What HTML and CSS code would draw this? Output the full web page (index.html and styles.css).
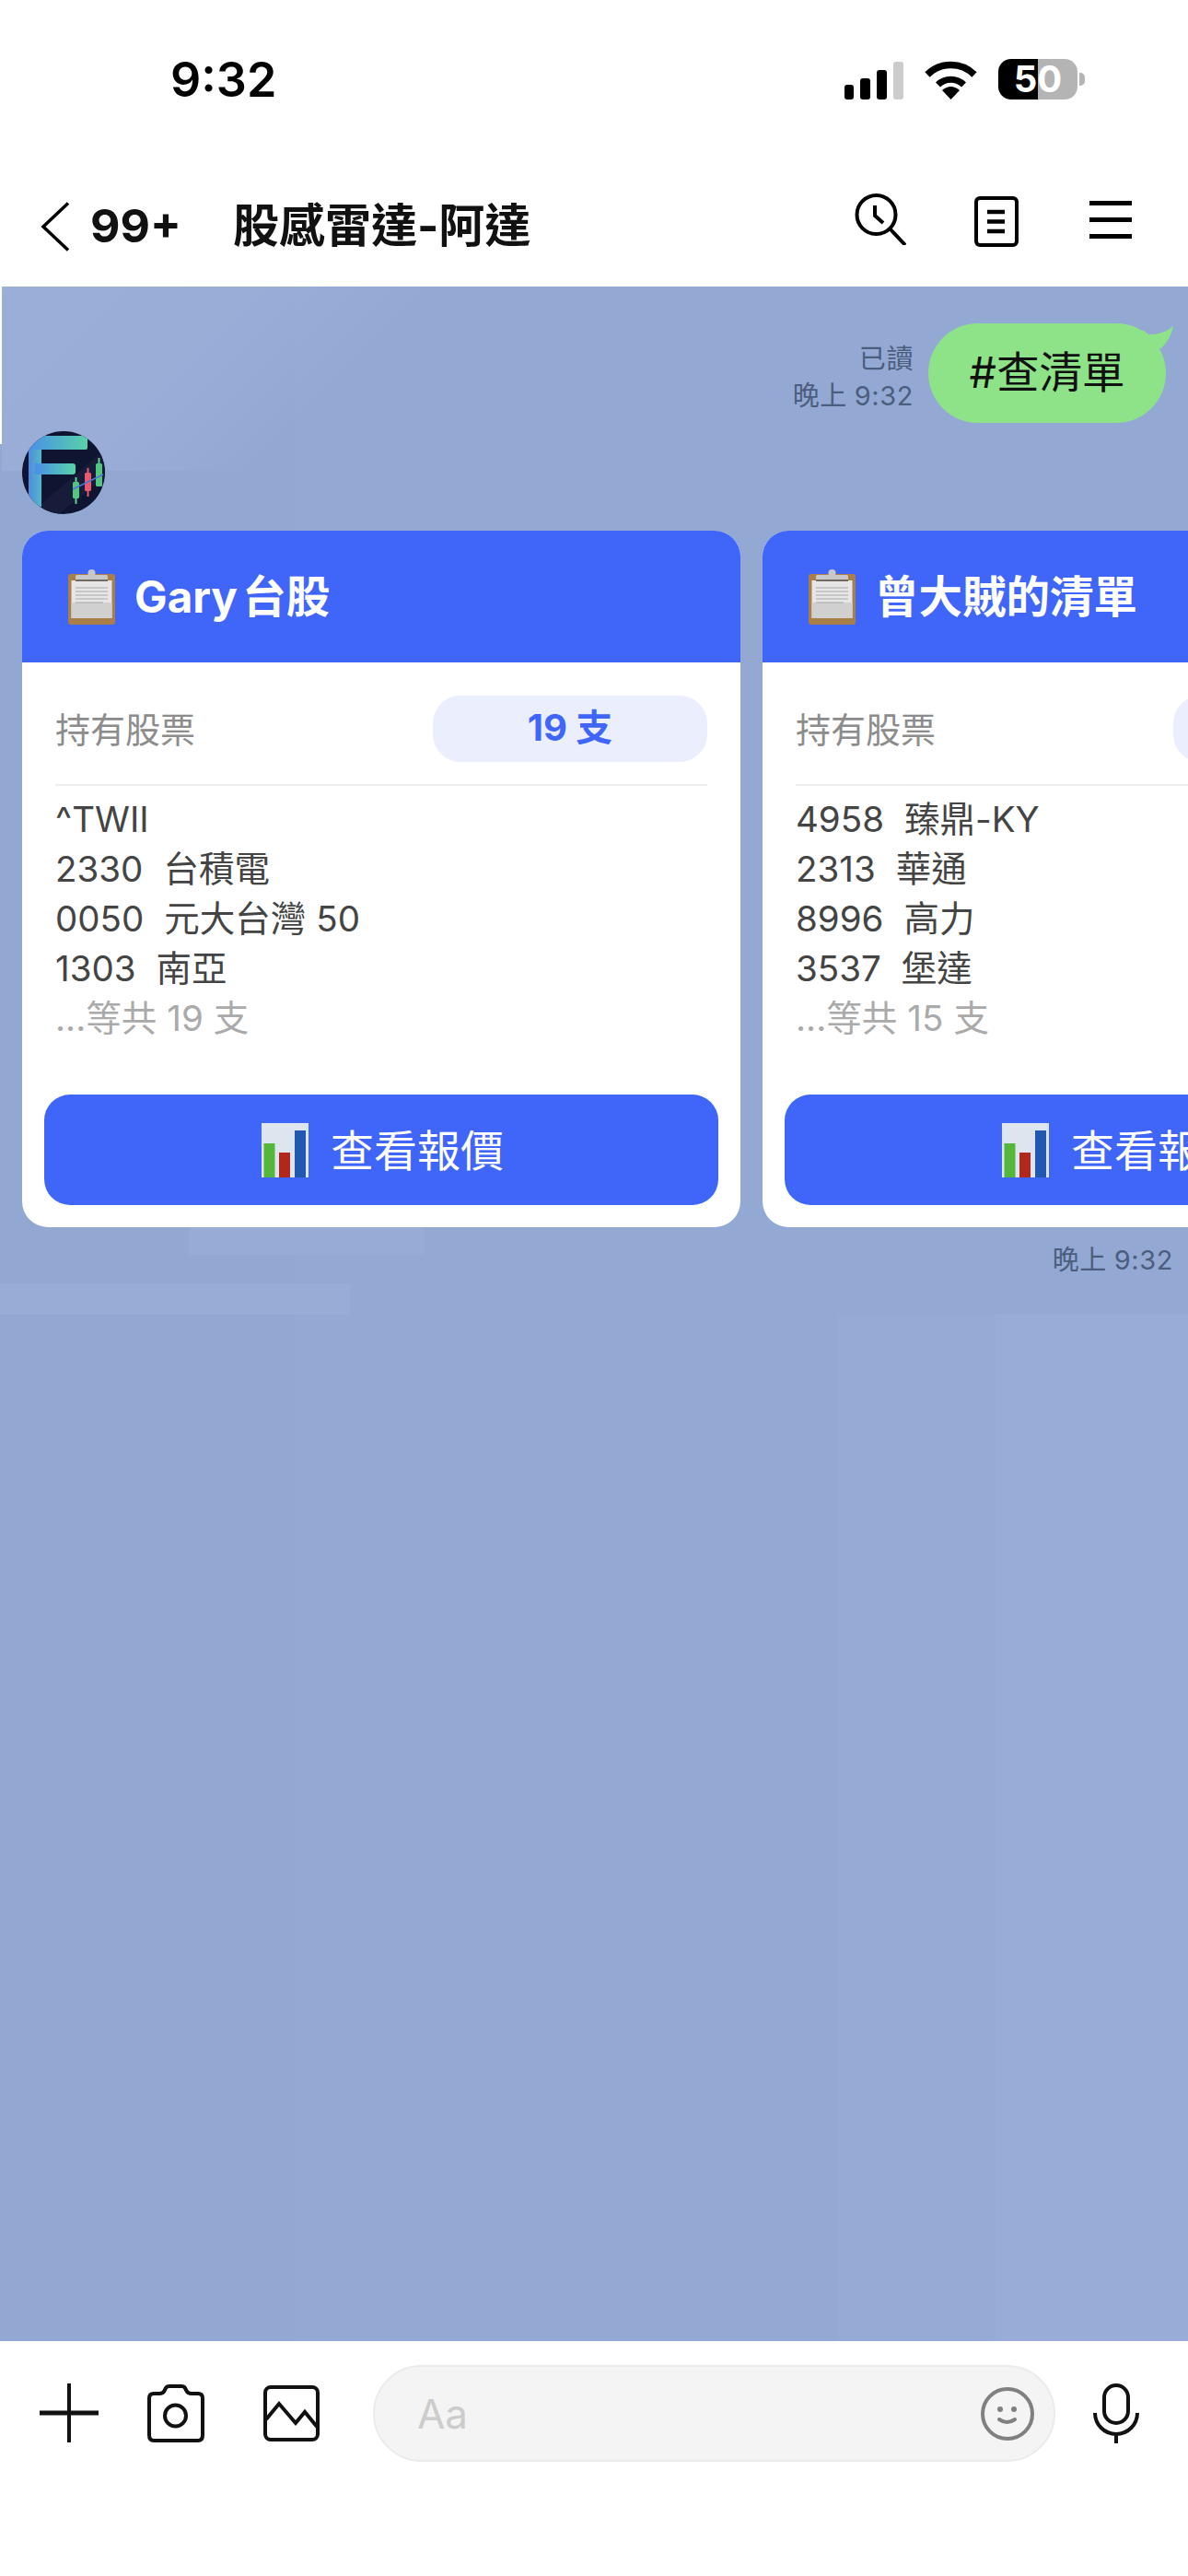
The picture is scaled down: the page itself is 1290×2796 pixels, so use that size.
FILE: index.html
```html
<!DOCTYPE html>
<html lang="zh-Hant">
<head>
<meta charset="utf-8">
<title>股感雷達-阿達</title>
<link rel="stylesheet" href="styles.css">
</head>
<body>
<div class="phone">
  <div class="status">
    <div class="clock">9:32</div>
    <div class="status-icons">
      <svg class="signal" width="64" height="41" viewBox="0 0 64 41"><rect x="0" y="25" width="10" height="16" rx="3"/><rect x="17" y="18" width="11" height="23" rx="3"/><rect x="35" y="9" width="11" height="32" rx="3"/><rect x="53" y="0" width="11" height="41" rx="3" fill="#cccccc"/></svg>
      <svg class="wifi" width="57" height="42" viewBox="0 0 57 42"><path d="M3 15A36 36 0 0 1 54 15" fill="none" stroke="#000" stroke-width="7.5"/><path d="M14.5 26A20 20 0 0 1 42.5 26" fill="none" stroke="#000" stroke-width="7"/><path d="M28.500 42L19 32Q28.500 24 38 32Z"/></svg>
      <div class="battery-wrap">
        <div class="battery">50</div>
        <div class="battery-nub"></div>
      </div>
    </div>
  </div>

  <header class="nav">
    <svg class="back" width="32" height="54" viewBox="0 0 32 54"><path d="M30 1.500L3 27L30 52.500" fill="none" stroke="#000" stroke-width="3.500"/></svg>
    <span class="count">99+</span>
    <h1 class="title">股感雷達-阿達</h1>
    <div class="nav-icons">
      <svg class="i-search" width="56" height="56" viewBox="0 0 56 56" fill="none" stroke="#000" stroke-width="4"><circle cx="23.500" cy="23" r="21"/><path d="M38 38L55 56"/><path d="M22 13V24L31 32"/></svg>
      <svg class="i-doc" width="48" height="55" viewBox="0 0 48 55" fill="none" stroke="#000" stroke-width="4"><rect x="2" y="2" width="44" height="51" rx="4"/><path d="M14 17H33M14 27.500H33M14 38H33" stroke-width="4.500"/></svg>
      <svg class="i-menu" width="46" height="41" viewBox="0 0 46 41"><path d="M0 2.500H46M0 20.500H46M0 38.500H46" stroke="#000" stroke-width="5"/></svg>
    </div>
  </header>

  <main class="chat">
    <div class="sent">
      <div class="meta"><div>已讀</div><div>晚上 9:32</div></div>
      <div class="bubble">#查清單
        <svg class="tail" width="36" height="32" viewBox="0 0 36 32"><path d="M2 8L8 13Q25 13 35 4Q32 18 22 28L2 28Z" fill="#8ee388"/></svg>
      </div>
    </div>

    <svg class="avatar" width="90" height="90" viewBox="0 0 90 90">
      <defs>
        <linearGradient id="fg" x1="0" y1="0" x2="1" y2="0"><stop offset="0" stop-color="#4a8fe8"/><stop offset="1" stop-color="#58d2a8"/></linearGradient>
        <linearGradient id="fv" x1="0" y1="0" x2="1" y2="0"><stop offset="0" stop-color="#4f8be0"/><stop offset="1" stop-color="#52b8c8"/></linearGradient>
        <clipPath id="ac"><circle cx="45" cy="45" r="45"/></clipPath>
      </defs>
      <g clip-path="url(#ac)">
        <rect width="90" height="90" fill="#0f1430"/>
        <path d="M8 90L90 20V50L40 90Z" fill="#161c3a"/>
        <rect x="7" y="19" width="14" height="63" fill="url(#fv)"/>
        <path d="M18 5H71V18Q71 20 69 20H7V16Q7 5 18 5Z" fill="url(#fg)"/>
        <path d="M14 35H55Q58 35 58 38V44Q58 47 55 47H14Z" fill="url(#fg)"/>
        <path d="M58.500 50V79M83.500 29V60" stroke="#5fd08d" stroke-width="2"/>
        <path d="M71.500 40V71" stroke="#e8596b" stroke-width="2"/>
        <rect x="55" y="55" width="7" height="18" rx="1.500" fill="#52c57f"/>
        <rect x="68" y="45" width="7" height="20" rx="1.500" fill="#e8596b"/>
        <rect x="80" y="35" width="7" height="25" rx="1.500" fill="#52c57f"/>
        <path d="M55 63L88 47" stroke="#4a74d8" stroke-width="1.500"/>
      </g>
    </svg>

    <div class="carousel">
      <article class="card">
        <div class="card-head">
          <svg class="clip" width="51" height="60" viewBox="0 0 51 60"><rect x="0" y="5" width="51" height="55" rx="3" fill="#a97e48"/><rect x="3.500" y="12" width="44" height="41" fill="#e6e6e6"/><rect x="3.500" y="36" width="44" height="17" fill="#d0d0d0"/><rect x="8" y="6" width="35" height="6" rx="1.500" fill="#c8c8c8"/><rect x="8" y="11" width="35" height="2" fill="#706a62"/><circle cx="25.500" cy="4" r="4" fill="#c8c8c8"/><path d="M8 20H43M8 24H43M8 28H43M8 32H43M8 36H38" stroke="#a8a8a8" stroke-width="1"/></svg>
          <span class="head-text">Gary 台股</span>
        </div>
        <div class="card-body">
          <div class="hold-row">
            <span class="hold-label">持有股票</span>
            <span class="hold-pill">19 支</span>
          </div>
          <ul class="stocks">
            <li>^TWII</li>
            <li>2330  台積電</li>
            <li>0050  元大台灣 50</li>
            <li>1303  南亞</li>
            <li class="more">...等共 19 支</li>
          </ul>
        </div>
        <div class="quote-btn">
          <svg class="chart" width="51" height="59" viewBox="0 0 51 59"><rect width="51" height="59" fill="#dde5ef"/><rect x="2.500" y="22" width="12" height="37" fill="#55b63c"/><rect x="19" y="32" width="12" height="27" fill="#b3261c"/><rect x="36" y="8" width="12" height="51" fill="#2158b0"/></svg>
          <span class="quote-text">查看報價</span>
        </div>
      </article>

      <article class="card">
        <div class="card-head">
          <svg class="clip" width="51" height="60" viewBox="0 0 51 60"><rect x="0" y="5" width="51" height="55" rx="3" fill="#a97e48"/><rect x="3.500" y="12" width="44" height="41" fill="#e6e6e6"/><rect x="3.500" y="36" width="44" height="17" fill="#d0d0d0"/><rect x="8" y="6" width="35" height="6" rx="1.500" fill="#c8c8c8"/><rect x="8" y="11" width="35" height="2" fill="#706a62"/><circle cx="25.500" cy="4" r="4" fill="#c8c8c8"/><path d="M8 20H43M8 24H43M8 28H43M8 32H43M8 36H38" stroke="#a8a8a8" stroke-width="1"/></svg>
          <span class="head-text">曾大賊的清單</span>
        </div>
        <div class="card-body">
          <div class="hold-row">
            <span class="hold-label">持有股票</span>
            <span class="hold-pill">15 支</span>
          </div>
          <ul class="stocks">
            <li>4958  臻鼎-KY</li>
            <li>2313  華通</li>
            <li>8996  高力</li>
            <li>3537  堡達</li>
            <li class="more">...等共 15 支</li>
          </ul>
        </div>
        <div class="quote-btn">
          <svg class="chart" width="51" height="59" viewBox="0 0 51 59"><rect width="51" height="59" fill="#dde5ef"/><rect x="2.500" y="22" width="12" height="37" fill="#55b63c"/><rect x="19" y="32" width="12" height="27" fill="#b3261c"/><rect x="36" y="8" width="12" height="51" fill="#2158b0"/></svg>
          <span class="quote-text">查看報價</span>
        </div>
      </article>
    </div>
    <div class="recv-time">晚上 9:32</div>
  </main>

  <footer class="composer">
    <svg class="i-plus" width="64" height="64" viewBox="0 0 64 64"><path d="M32 0V64" stroke="#111" stroke-width="4"/><path d="M0 32H64" stroke="#111" stroke-width="5"/></svg>
    <svg class="i-cam" width="64" height="64" viewBox="0 0 64 64" fill="none" stroke="#111" stroke-width="4"><path d="M3 16Q3 11 8 11H14Q18 11 19.500 8L21 5Q22 3 25 3H38Q41 3 42 5L43.500 8Q45 11 49 11H56Q61 11 61 16V56Q61 62 56 62H8Q3 62 3 56Z"/><circle cx="31.500" cy="35" r="11.500"/></svg>
    <svg class="i-img" width="61" height="61" viewBox="0 0 61 61" fill="none" stroke="#111" stroke-width="4"><rect x="2" y="2" width="57" height="57" rx="6"/><path d="M3 37L17 20L35 41L45 29L59 46"/></svg>
    <div class="input">
      <span class="placeholder">Aa</span>
      <svg class="i-smile" width="58" height="58" viewBox="0 0 58 58" fill="none" stroke="#808080" stroke-width="4"><circle cx="29" cy="29" r="27"/><circle cx="21" cy="24" r="3" fill="#808080" stroke="none"/><circle cx="36" cy="24" r="3" fill="#808080" stroke="none"/><path d="M20 35Q28.500 41 37 35" stroke-linecap="round"/></svg>
    </div>
    <svg class="i-mic" width="50" height="65" viewBox="0 0 50 65" fill="none" stroke="#111" stroke-width="4"><rect x="12" y="2" width="26" height="41" rx="13"/><path d="M2 32A23 23 0 0 0 48 32"/><path d="M25 55V65"/></svg>
  </footer>
</div>
</body>
</html>
```

FILE: styles.css
```css
* { box-sizing: border-box; }
html, body { margin: 0; padding: 0; }
body {
  width: 1290px;
  height: 2796px;
  overflow: hidden;
  background: #fff;
  font-family: Inter, "Noto Sans CJK TC", sans-serif;
  color: #111;
}
svg { display: block; flex: none; }

.phone { width: 1290px; height: 2796px; display: flex; flex-direction: column; }

/* status bar */
.status {
  height: 174px;
  flex: none;
  display: flex;
  align-items: flex-start;
  justify-content: space-between;
  padding: 56px 112px 0 185px;
}
.clock { font-size: 52px; line-height: 62px; font-weight: 600; color: #000; }
.status-icons { display: flex; align-items: flex-end; padding-top: 8px; }
.signal { margin-right: 23px; }
.wifi { margin-right: 23px; }
.battery-wrap { display: flex; align-items: center; }
.battery {
  width: 86px;
  height: 44px;
  border-radius: 14px;
  background: linear-gradient(90deg, #000 50%, #b4b4b4 50%);
  color: #fff;
  font-size: 40px;
  font-weight: 700;
  line-height: 44px;
  text-align: center;
}
.battery-nub { width: 6px; height: 14px; margin-left: 2px; background: #b4b4b4; border-radius: 0 5px 5px 0; }

/* nav */
.nav {
  height: 137px;
  flex: none;
  display: flex;
  align-items: center;
  padding: 0 61px 0 44px;
}
.back { margin-right: 22px; margin-top: 6px; }
.count { font-size: 50px; line-height: 60px; font-weight: 700; color: #111; margin-top: 4px; }
.title { margin: 4px 0 0 56px; font-size: 50px; line-height: 60px; font-weight: 700; color: #111; }
.nav-icons { margin-left: auto; display: flex; align-items: center; margin-bottom: 8px; }
.i-search { margin-right: 74px; margin-top: -2px; }
.i-doc { margin-right: 77px; margin-top: 3px; }

/* chat */
.chat {
  position: relative;
  flex: 1;
  min-height: 0;
  padding-top: 40px;
  background-color: #93a9d4;
  background-image:
    linear-gradient(#99acd5, #99acd5),
    linear-gradient(#97abd6, #97abd6),
    linear-gradient(90deg, #96aad6 0, #96aad6 45%, #98acd7 45%, #98acd7 100%),
    linear-gradient(135deg, #9aaed7 0, #99add7 40%, rgba(147, 169, 212, 0) 70%),
    linear-gradient(90deg, #92a8d3 0, #92a8d3 320px, #93a9d4 320px, #93a9d4 910px);
  background-repeat: no-repeat;
  background-size: 380px 33px, 255px 30px, 380px 1114px, 480px 200px, 100% 100%;
  background-position: 0 1083px, 205px 1021px, 100% 100%, 2px 0, 0 0;
}
.chat::before {
  content: "";
  position: absolute;
  left: 0;
  top: 0;
  width: 2px;
  height: 171px;
  background: #fff;
}

.sent { display: flex; justify-content: flex-end; align-items: flex-end; padding-right: 24px; }
.meta {
  margin-right: 16px;
  margin-bottom: 9px;
  text-align: right;
  font-size: 29px;
  line-height: 40px;
  letter-spacing: 0.6px;
  word-spacing: -1px;
  color: #4c5d7e;
}
.bubble {
  position: relative;
  width: 258px;
  height: 108px;
  border-radius: 54px;
  background: #8ee388;
  color: #111;
  font-size: 46.500px;
  line-height: 106px;
  text-align: center;
}
.tail { position: absolute; right: -9px; top: -1px; }

.avatar { margin: 9px 0 0 24px; }

.carousel { display: flex; gap: 24px; padding-left: 24px; margin-top: 18px; }
.card {
  flex: none;
  width: 780px;
  height: 756px;
  border-radius: 28px;
  overflow: hidden;
  background: #fff;
  display: flex;
  flex-direction: column;
}
.card-head {
  height: 143px;
  flex: none;
  background: #4066f9;
  color: #fff;
  display: flex;
  align-items: center;
  gap: 21px;
  padding-left: 50px;
  font-size: 47.500px;
  font-weight: 700;
}
.head-text { margin-top: -6px; word-spacing: -6px; }
.card-body { flex: 1; padding: 36px 36px 0; }
.hold-row {
  display: flex;
  align-items: center;
  justify-content: space-between;
  padding-bottom: 24px;
  border-bottom: 2px solid #eeeeee;
}
.hold-label { font-size: 38px; color: #8c8c8c; margin-top: -4px; }
.hold-pill {
  width: 298px;
  height: 72px;
  border-radius: 30px;
  background: #ebeffd;
  color: #4066f9;
  font-size: 40px;
  font-weight: 700;
  line-height: 70px;
  text-align: center;
}
.stocks {
  list-style: none;
  margin: 9px 0 0;
  padding: 0;
  font-size: 38.500px;
  line-height: 54px;
  color: #444;
}
.stocks li { white-space: pre; word-spacing: 0.2px; }
.stocks .more { color: #aaaaaa; }
.quote-btn {
  flex: none;
  height: 120px;
  margin: 0 24px 24px;
  padding-left: 3px;
  border-radius: 28px;
  background: #4066f9;
  color: #fff;
  font-size: 47px;
  display: flex;
  align-items: center;
  justify-content: center;
  gap: 24px;
}
.quote-text { margin-top: -6px; }
.recv-time {
  text-align: right;
  padding-right: 16px;
  margin-top: 16px;
  font-size: 29px;
  line-height: 40px;
  letter-spacing: 0.6px;
  word-spacing: -1px;
  color: #4c5d7e;
}

/* composer */
.composer {
  height: 255px;
  flex: none;
  display: flex;
  align-items: flex-start;
  padding: 46px 53px 0 43px;
  background: #fff;
}
.i-plus { margin-right: 52px; }
.i-cam { margin-right: 63px; }
.i-img { margin-top: 2px; margin-right: 58px; }
.input {
  width: 741px;
  height: 105px;
  margin-top: -20px;
  margin-right: 41px;
  padding: 0 21px 0 46px;
  border: 2px solid #ebebeb;
  border-radius: 53px;
  background: #f4f4f4;
  display: flex;
  align-items: center;
  justify-content: space-between;
}
.placeholder { font-size: 44px; color: #cccccc; }
```
